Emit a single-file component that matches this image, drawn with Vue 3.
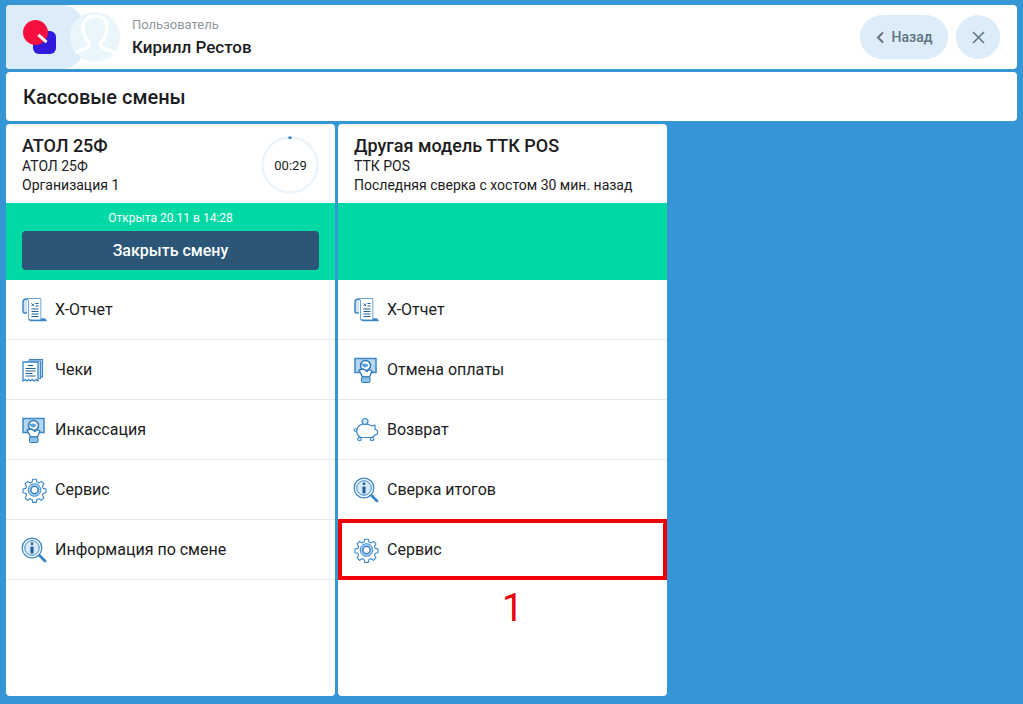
<template>
  <div class="page">
    <svg class="sprite" width="0" height="0">
      <symbol id="ic-report" viewBox="0 0 26 26">
        <path d="M6 2h13.500v19.500M6 2C3.800 2 2 3 2 5v9.500c0 1 .8 1.500 1.800 1.500H6M6 2c1.500.3 2 1.300 2 3v16.500c0 1.300 1 2 2.500 2H25c-.5-1-1.200-1.500-2-1.500h-3.500" fill="#cfe4f5" stroke="#3a87c8" stroke-width="1.500" stroke-linejoin="round"/>
        <path d="M8 5c0-1.500-.5-2.700-2-3h13.500v20H8z" fill="#fff"/>
        <path d="M10.500 6.500l2.500 2.500M13 6.500L10.500 9" fill="none" stroke="#1f5f96" stroke-width="1"/>
        <path d="M14.500 6.500h3M14.500 9h3M10.500 12h7M10.500 14.500h7M10.500 17h7M10.500 19.500h7" stroke="#1f5f96" stroke-width="1.100"/>
      </symbol>
      <symbol id="ic-checks" viewBox="0 0 26 26">
        <path d="M8 2.500h13.500V20H20M6.500 4h13v17.500H18" fill="#cfe4f5" stroke="#3a87c8" stroke-width="1.200"/>
        <path d="M2 5h15v19l-1.900-1.500-1.900 1.500-1.900-1.500-1.800 1.500-1.900-1.500-1.800 1.500L4 22.500 2 24z" fill="#fff" stroke="#3a87c8" stroke-width="1.300" stroke-linejoin="round"/>
        <path d="M7 8.500h5M4.500 11.500h10M4.500 14h10M4.500 16.500h7M4.500 19h10" stroke="#1f5f96" stroke-width="1.100"/>
      </symbol>
      <symbol id="ic-cash" viewBox="0 0 26 26">
        <rect x="2" y="1.500" width="21" height="14" fill="#b7d7f0" stroke="#3a87c8" stroke-width="1.500"/>
        <circle cx="12.500" cy="8.500" r="5" fill="#fff" stroke="#2f79b8" stroke-width="1.500"/>
        <path d="M8 7.500c3-2 6-1 7.500.5-1 2-3 3-5 2z" fill="#5a9fd6"/>
        <path d="M6 13l3.500 7h7l2.500-6-3-1.500-2 2-3.500-2.500z" fill="#fff" stroke="#2f79b8" stroke-width="1.300" stroke-linejoin="round"/>
        <rect x="8.500" y="20" width="8.500" height="5.500" rx="1" fill="#8fc1e8" stroke="#2f79b8" stroke-width="1"/>
      </symbol>
      <symbol id="ic-gear" viewBox="0 0 26 26">
        <g transform="translate(13.500 13) scale(.93) translate(-13 -13)">
          <path d="M11 1.500h4l.6 3 2.200.9 2.600-1.700 2.800 2.800-1.700 2.600.9 2.200 3 .6v4l-3 .6-.9 2.200 1.700 2.600-2.800 2.800-2.600-1.700-2.200.9-.6 3h-4l-.6-3-2.200-.9-2.600 1.700-2.800-2.800 1.700-2.600-.9-2.200-3-.6v-4l3-.6.9-2.200-1.700-2.600 2.800-2.800 2.600 1.700 2.200-.9z" fill="#fff" stroke="#3a87c8" stroke-width="1.200" stroke-linejoin="round"/>
          <circle cx="13" cy="13" r="6.800" fill="#a9d0ee" stroke="#3a87c8" stroke-width="1"/>
          <circle cx="13" cy="13" r="3.900" fill="#fff" stroke="#2f79b8" stroke-width="1.500"/>
        </g>
      </symbol>
      <symbol id="ic-info" viewBox="0 0 26 26">
        <circle cx="11" cy="11" r="9.800" fill="#fff" stroke="#3a87c8" stroke-width="1.300"/>
        <circle cx="11" cy="11" r="7.300" fill="#d7e9f7" stroke="#3a87c8" stroke-width="1"/>
        <circle cx="11" cy="6.800" r="1.400" fill="#1f5f96"/>
        <rect x="9.500" y="9.500" width="3" height="7" rx=".8" fill="#1f5f96"/>
        <path d="M18.500 18.500l5.500 5.500" stroke="#3a87c8" stroke-width="2.800" stroke-linecap="round"/>
      </symbol>
      <symbol id="ic-piggy" viewBox="0 0 26 26">
        <path d="M4 12c1-3 4-5 8-5 3 0 5 .8 7 2l3-1v4l2.500 2v3L22 18c-1 1-2 2-3 2.500H8C5 19.500 3 16 4 12z" fill="#fff" stroke="#3a87c8" stroke-width="1.200" stroke-linejoin="round"/>
        <circle cx="12" cy="4.500" r="3" fill="#cfe4f5" stroke="#3a87c8" stroke-width="1.200"/>
        <circle cx="6.500" cy="22" r="1.800" fill="#cfe4f5" stroke="#3a87c8" stroke-width="1.100"/>
        <circle cx="19" cy="22" r="1.800" fill="#cfe4f5" stroke="#3a87c8" stroke-width="1.100"/>
        <circle cx="2.500" cy="13" r="1.500" fill="#cfe4f5" stroke="#3a87c8" stroke-width="1"/>
      </symbol>
    </svg>

    <header class="panel top">
      <div class="logo-wrap">
        <div class="logo">
          <span class="logo-square"></span>
          <span class="logo-circle"></span>
          <span class="logo-tick"></span>
        </div>
        <div class="avatar">
          <svg width="50" height="50" viewBox="0 0 50 50">
            <path d="M25 4c-8 0-12 5-12 12 0 6 2 10 6 14v4c-2 3-8 4-12 6l-3 3M25 4c8 0 12 5 12 12 0 6-2 10-6 14v4c2 3 8 4 12 6l3 3" fill="none" stroke="#fff" stroke-width="3.500"/>
          </svg>
        </div>
      </div>
      <div class="user">
        <div class="user-label">Пользователь</div>
        <div class="user-name">Кирилл Рестов</div>
      </div>
      <div class="actions">
        <button class="back">
          <svg width="9" height="13" viewBox="0 0 9 13"><path d="M7 1.500L2 6.500l5 5" fill="none" stroke="#5f7380" stroke-width="2"/></svg>
          Назад
        </button>
        <button class="close">
          <svg width="13" height="13" viewBox="0 0 13 13"><path d="M1 1l11 11M12 1L1 12" stroke="#5f7380" stroke-width="1.500"/></svg>
        </button>
      </div>
    </header>

    <div class="panel title">Кассовые смены</div>

    <main class="columns">
      <section v-for="col in columns" :key="col.name" class="col">
        <div class="col-head">
          <div>
            <div class="col-name">{{ col.name }}</div>
            <div class="col-sub">{{ col.model }}</div>
            <div class="col-sub">{{ col.note }}</div>
          </div>
          <div v-if="col.timer" class="timer">
            <svg width="58" height="58" viewBox="0 0 58 58">
              <circle cx="29" cy="29" r="27.500" fill="none" stroke="#ebf4fb" stroke-width="2.500"/>
              <path d="M29 .5v2.500" stroke="#3f83bd" stroke-width="3"/>
            </svg>
            <span>{{ col.timer }}</span>
          </div>
        </div>
        <div class="status">
          <template v-if="col.opened">
            <div class="opened">{{ col.opened }}</div>
            <button class="shift">Закрыть смену</button>
          </template>
        </div>
        <div v-for="row in col.rows" :key="row.text" class="row">
          <svg class="row-icon" width="26" height="26"><use :href="'#ic-' + row.icon" /></svg>
          <span>{{ row.text }}</span>
          <template v-if="row.marked">
            <div class="mark"></div>
            <div class="mark-num">1</div>
          </template>
        </div>
      </section>
    </main>
  </div>
</template>

<script setup>
const columns = [
  {
    name: 'АТОЛ 25Ф',
    model: 'АТОЛ 25Ф',
    note: 'Организация 1',
    timer: '00:29',
    opened: 'Открыта 20.11 в 14:28',
    rows: [
      { icon: 'report', text: 'Х-Отчет' },
      { icon: 'checks', text: 'Чеки' },
      { icon: 'cash', text: 'Инкассация' },
      { icon: 'gear', text: 'Сервис' },
      { icon: 'info', text: 'Информация по смене' }
    ]
  },
  {
    name: 'Другая модель ТТК POS',
    model: 'ТТК POS',
    note: 'Последняя сверка с хостом 30 мин. назад',
    rows: [
      { icon: 'report', text: 'Х-Отчет' },
      { icon: 'cash', text: 'Отмена оплаты' },
      { icon: 'piggy', text: 'Возврат' },
      { icon: 'info', text: 'Сверка итогов' },
      { icon: 'gear', text: 'Сервис', marked: true }
    ]
  }
]
</script>

<style>
html, body {
  margin: 0;
  background: #3595d5;
}
</style>

<style scoped>
.page {
  width: 1023px;
  height: 704px;
  box-sizing: border-box;
  padding: 5px 6px 8px;
  display: flex;
  flex-direction: column;
  gap: 3px;
  background: #3595d5;
  font-family: Roboto, "Noto Sans", sans-serif;
  color: #1c1c22;
  overflow: hidden;
}
.sprite {
  position: absolute;
}
.panel {
  background: #fff;
  border-radius: 4px;
}
.top {
  height: 64px;
  display: flex;
  align-items: center;
  overflow: hidden;
}
.logo-wrap {
  width: 81px;
  height: 64px;
  flex: none;
  position: relative;
  background: #dcecf9;
  border-radius: 0 24px 24px 0 / 0 50% 50% 0;
}
.logo {
  position: absolute;
  left: 17px;
  top: 15px;
  width: 34px;
  height: 36px;
}
.logo-circle {
  position: absolute;
  left: 0;
  top: 0;
  width: 25px;
  height: 25px;
  border-radius: 50%;
  background: #f5103f;
}
.logo-square {
  position: absolute;
  left: 10px;
  top: 11px;
  width: 23px;
  height: 23px;
  border-radius: 6px;
  background: #3219dc;
}
.logo-tick {
  position: absolute;
  left: 14px;
  top: 17px;
  width: 11px;
  height: 3px;
  background: #fff;
  transform: rotate(42deg);
}
.avatar {
  position: absolute;
  left: 64px;
  top: 7px;
  width: 50px;
  height: 50px;
  border-radius: 50%;
  background: #ebf5fc;
  overflow: hidden;
}
.user {
  margin-left: 45px;
  padding-top: 1px;
}
.user-label {
  font-size: 13px;
  line-height: 18px;
  color: #8e979d;
}
.user-name {
  font-size: 17px;
  line-height: 26px;
  font-weight: 500;
}
.actions {
  margin-left: auto;
  margin-right: 17px;
  display: flex;
  gap: 8px;
}
.back, .close {
  height: 44px;
  border: 0;
  padding: 0;
  background: #dcecf9;
  color: #5f7380;
  font-family: inherit;
  display: flex;
  align-items: center;
  justify-content: center;
}
.back {
  width: 88px;
  gap: 7px;
  border-radius: 22px;
  font-size: 14px;
  font-weight: 500;
}
.close {
  width: 44px;
  border-radius: 50%;
}
.title {
  height: 49px;
  display: flex;
  align-items: center;
  padding-left: 17px;
  font-size: 20px;
  font-weight: 500;
}
.columns {
  flex: 1;
  display: flex;
  gap: 3px;
  min-height: 0;
}
.col {
  width: 329px;
  background: #fff;
  border-radius: 4px;
  position: relative;
}
.col-head {
  height: 79px;
  box-sizing: border-box;
  padding: 11px 16px 0;
  display: flex;
  justify-content: space-between;
}
.col-name {
  font-size: 18px;
  line-height: 22px;
  font-weight: 500;
}
.col-sub {
  font-size: 14px;
  line-height: 19px;
}
.timer {
  position: relative;
  width: 58px;
  height: 58px;
  margin-top: 1px;
}
.timer svg {
  display: block;
}
.timer span {
  position: absolute;
  inset: 0 0 0 1px;
  display: flex;
  align-items: center;
  justify-content: center;
  font-size: 13px;
}
.status {
  height: 77px;
  box-sizing: border-box;
  padding: 7px 16px 0;
  background: #00d9a3;
}
.opened {
  text-align: center;
  color: #fff;
  font-size: 12px;
  line-height: 16px;
}
.shift {
  display: block;
  width: 100%;
  height: 39px;
  margin-top: 5px;
  border: 0;
  border-radius: 4px;
  background: #2b5678;
  color: #fff;
  font-family: inherit;
  font-size: 16px;
  font-weight: 500;
}
.row {
  height: 60px;
  box-sizing: border-box;
  border-bottom: 1px solid #e6e9eb;
  padding-left: 15px;
  display: flex;
  align-items: center;
  gap: 8px;
  font-size: 16px;
  position: relative;
}
.row-icon {
  flex: none;
}
.mark {
  position: absolute;
  left: 0;
  right: 0;
  top: -1px;
  height: 61px;
  box-sizing: border-box;
  border: 4px solid #f00007;
}
.mark-num {
  position: absolute;
  left: 164px;
  top: 66px;
  color: #e8000d;
  font-size: 38px;
  line-height: 44px;
}
</style>
